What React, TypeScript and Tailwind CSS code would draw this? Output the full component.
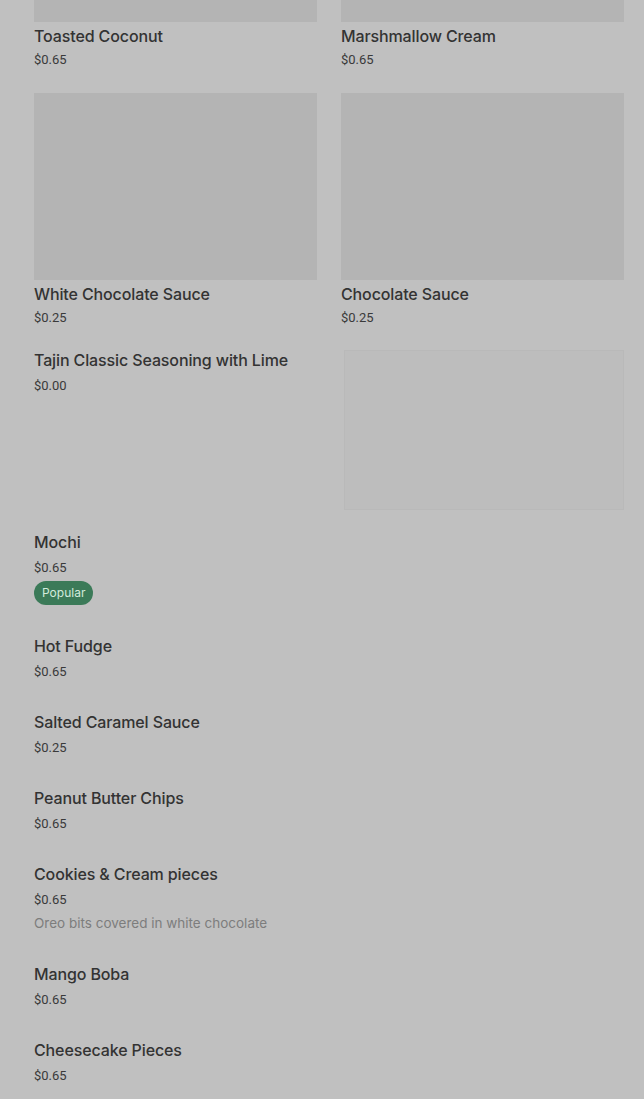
import clsx from "clsx";

type Item = {
    name: string;
    price: string;
    description?: string;
    popular?: boolean;
};

const gridTop: Item[] = [
    { name: "Toasted Coconut", price: "$0.65" },
    { name: "Marshmallow Cream", price: "$0.65" },
];

const gridSecond: Item[] = [
    { name: "White Chocolate Sauce", price: "$0.25" },
    { name: "Chocolate Sauce", price: "$0.25" },
];

const listItems: Item[] = [
    { name: "Mochi", price: "$0.65", popular: true },
    { name: "Hot Fudge", price: "$0.65" },
    { name: "Salted Caramel Sauce", price: "$0.25" },
    { name: "Peanut Butter Chips", price: "$0.65" },
    {
        name: "Cookies & Cream pieces",
        price: "$0.65",
        description: "Oreo bits covered in white chocolate",
    },
    { name: "Mango Boba", price: "$0.65" },
    { name: "Cheesecake Pieces", price: "$0.65" },
];

const nameClass = "text-base leading-6 font-medium tracking-[-0.12px] text-[#333333]";
// prices render in a narrower face than the names
const priceClass =
    "pt-px font-['Roboto',_'Liberation_Sans',_sans-serif] text-[13px] leading-[19px] text-[#3a3a3a]";

function GridCard({ item, cropped }: { item: Item; cropped?: boolean }) {
    return (
        <div className="flex flex-col">
            <div
                className={clsx(
                    "w-full bg-[#b4b4b4]",
                    cropped ? "h-[22px]" : "h-[187px]"
                )}
            />
            <div className={clsx("mt-[2px]", nameClass)}>{item.name}</div>
            <div className={clsx("mt-px", priceClass)}>{item.price}</div>
        </div>
    );
}

function ListRow({ item }: { item: Item }) {
    return (
        <div className="flex flex-col items-start">
            <div className={nameClass}>{item.name}</div>
            <div className={clsx("mt-[3px]", priceClass)}>{item.price}</div>
            {item.description && (
                <div className="mt-1 text-[13.5px] leading-5 text-[#7d7d7d]">
                    {item.description}
                </div>
            )}
            {item.popular && (
                <span className="mt-1 flex h-6 items-center rounded-full bg-[#3b7a58] px-2 text-xs text-[#d3ebdc]">
                    Popular
                </span>
            )}
        </div>
    );
}

export default function App() {
    return (
        <div
            className="min-h-[1099px] w-full overflow-hidden bg-[#c0c0c0] pl-[34px] pr-[20px]"
            style={{ fontFamily: "Inter, 'Liberation Sans', sans-serif" }}
        >
            <div className="grid grid-cols-2 gap-x-6">
                {gridTop.map((item) => (
                    <GridCard key={item.name} item={item} cropped />
                ))}
            </div>

            <div className="mt-6 grid grid-cols-2 gap-x-6">
                {gridSecond.map((item) => (
                    <GridCard key={item.name} item={item} />
                ))}
            </div>

            <div className="mt-[21px] grid grid-cols-2 gap-x-6">
                <div className="flex flex-col">
                    <div className={nameClass}>Tajin Classic Seasoning with Lime</div>
                    <div className={clsx("mt-[3px]", priceClass)}>$0.00</div>
                </div>
                <div className="ml-[3px] mt-[2px] h-[160px] border border-[#b9b9b9] bg-[#bdbdbd]" />
            </div>

            <div className="mt-5 flex flex-col gap-[29px] pb-10">
                {listItems.map((item) => (
                    <ListRow key={item.name} item={item} />
                ))}
            </div>
        </div>
    );
}
